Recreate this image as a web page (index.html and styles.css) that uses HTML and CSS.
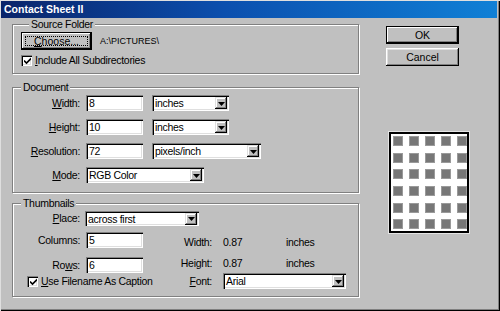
FILE: index.html
```html
<!DOCTYPE html>
<html>
<head>
<meta charset="utf-8">
<link rel="stylesheet" href="styles.css">
</head>
<body>
<div class="window">
  <div class="titlebar">Contact Sheet II</div>
  <div class="content">
    <div class="main">
      <fieldset class="group source">
        <legend>Source Folder</legend>
        <div class="inner">
          <div class="src-row">
            <button class="btn default focus"><u>C</u>hoose...</button>
            <span class="path">A:\PICTURES\</span>
          </div>
          <div class="check-row">
            <span class="cb"><svg width="7" height="7" viewBox="0 0 7 7"><path d="M0 2.5 L2.5 5 L7 0.5" fill="none" stroke="#000" stroke-width="1.6"/></svg></span>
            <span><u>I</u>nclude All Subdirectories</span>
          </div>
        </div>
      </fieldset>

      <fieldset class="group doc">
        <legend>Document</legend>
        <div class="doc-rows">
          <div class="row">
            <span class="lbl"><u>W</u>idth:</span>
            <span class="field num">8</span>
            <span class="select w77"><span class="val">inches</span><span class="arrow"><svg width="7" height="4" viewBox="0 0 7 4"><path d="M0 0H7L3.5 4Z" fill="#000"/></svg></span></span>
          </div>
          <div class="row">
            <span class="lbl"><u>H</u>eight:</span>
            <span class="field num">10</span>
            <span class="select w77"><span class="val">inches</span><span class="arrow"><svg width="7" height="4" viewBox="0 0 7 4"><path d="M0 0H7L3.5 4Z" fill="#000"/></svg></span></span>
          </div>
          <div class="row">
            <span class="lbl"><u>R</u>esolution:</span>
            <span class="field num">72</span>
            <span class="select w109"><span class="val">pixels/inch</span><span class="arrow"><svg width="7" height="4" viewBox="0 0 7 4"><path d="M0 0H7L3.5 4Z" fill="#000"/></svg></span></span>
          </div>
          <div class="row">
            <span class="lbl"><u>M</u>ode:</span>
            <span class="select w118 mode"><span class="val">RGB Color</span><span class="arrow"><svg width="7" height="4" viewBox="0 0 7 4"><path d="M0 0H7L3.5 4Z" fill="#000"/></svg></span></span>
          </div>
        </div>
      </fieldset>

      <fieldset class="group thumbs">
        <legend>Thumbnails</legend>
        <div class="tgrid">
          <span class="lbl c1 r1"><u>P</u>lace:</span>
          <span class="select w114 c2 r1"><span class="val">across first</span><span class="arrow"><svg width="7" height="4" viewBox="0 0 7 4"><path d="M0 0H7L3.5 4Z" fill="#000"/></svg></span></span>

          <span class="lbl c1 r2 mid">Columns:</span>
          <span class="field num c2 r2">5</span>
          <span class="lbl2 c3 r2 wl">Width:</span>
          <span class="value c4 r2 wl">0.87</span>
          <span class="value c5 r2 wl">inches</span>

          <span class="lbl c1 r3 mid">Ro<u>w</u>s:</span>
          <span class="field num c2 r3">6</span>
          <span class="lbl2 c3 r3 hl">Height:</span>
          <span class="value c4 r3 hl">0.87</span>
          <span class="value c5 r3 hl">inches</span>

          <div class="check-row cap r4">
            <span class="cb"><svg width="7" height="7" viewBox="0 0 7 7"><path d="M0 2.5 L2.5 5 L7 0.5" fill="none" stroke="#000" stroke-width="1.6"/></svg></span>
            <span><u>U</u>se Filename As Caption</span>
          </div>
          <span class="lbl2 c3 r4 fl"><u>F</u>ont:</span>
          <span class="select w123 font r4"><span class="val">Arial</span><span class="arrow"><svg width="7" height="4" viewBox="0 0 7 4"><path d="M0 0H7L3.5 4Z" fill="#000"/></svg></span></span>
        </div>
      </fieldset>
    </div>

    <div class="side">
      <button class="btn default">OK</button>
      <button class="btn">Cancel</button>
      <div class="preview">
        <i></i><i></i><i></i><i></i><i></i>
        <i></i><i></i><i></i><i></i><i></i>
        <i></i><i></i><i></i><i></i><i></i>
        <i></i><i></i><i></i><i></i><i></i>
        <i></i><i></i><i></i><i></i><i></i>
        <i></i><i></i><i></i><i></i><i></i>
      </div>
    </div>
  </div>
</div>
</body>
</html>
```

FILE: styles.css
```css
* { box-sizing: border-box; }
html, body { margin: 0; padding: 0; }
body {
  background: #c0c0c0;
  font-family: "Liberation Sans", Arial, sans-serif;
  font-size: 10.5px;
  letter-spacing: -0.3px;
  line-height: 13px;
  color: #000;
}
.window {
  width: 500px;
  height: 311px;
  background: #c0c0c0;
  padding: 1px 3px 3px 1px;
  box-shadow: inset 1px 1px #dfdfdf, inset -1px -1px #000, inset -2px -2px #808080;
  display: flex;
  flex-direction: column;
}
.titlebar {
  height: 17px;
  flex: none;
  background: linear-gradient(to right, #0a246a, #0b4fae 45%, #1080d6);
  color: #fff;
  font-weight: bold;
  font-size: 10.5px;
  letter-spacing: 0;
  line-height: 17px;
  padding-left: 3px;
}
.content {
  display: flex;
  padding-left: 11px;
}
.main {
  width: 347px;
  display: flex;
  flex-direction: column;
}
.side {
  width: 73px;
  margin-left: 27px;
  padding-top: 8px;
  display: flex;
  flex-direction: column;
}

/* group boxes */
.group {
  margin: 0;
  padding: 0;
  min-width: 0;
  border: 1px solid #808080;
  box-shadow: inset 1px 1px #fff, 1px 1px #fff;
}
.group legend {
  margin-left: 8px;
  padding: 0 2px;
  line-height: 13px;
  background: #c0c0c0;
}
.source { padding: 1px 0 7px 8px; }
.doc { margin-top: 7px; padding: 1px 0 9px 0; }
.thumbs { margin-top: 4px; padding: 1px 0 7px 0; }

/* buttons */
.btn {
  display: flex;
  align-items: center;
  justify-content: center;
  height: 18px;
  width: 73px;
  padding: 0;
  border: none;
  background: #c0c0c0;
  font: inherit;
  color: #000;
  box-shadow: inset -1px -1px #000, inset 1px 1px #fff, inset -2px -2px #808080, inset 2px 2px #dfdfdf;
}
.btn.default {
  box-shadow: inset 0 0 0 1px #000, inset -2px -2px #000, inset 2px 2px #fff, inset -3px -3px #808080;
}
.btn.focus {
  outline: 1px dotted #000;
  outline-offset: -5px;
}
.side .btn + .btn { margin-top: 4px; }

.src-row {
  display: flex;
  align-items: center;
}
.src-row .btn { width: 71px; }
.path {
  margin-left: 8px;
  font-size: 9px;
  letter-spacing: 0;
}

/* checkbox */
.check-row {
  display: flex;
  align-items: center;
  margin-top: 5px;
  height: 11px;
}
.cb {
  width: 11px;
  height: 11px;
  flex: none;
  background: #fff;
  margin-right: 3px;
  display: flex;
  align-items: center;
  justify-content: center;
  box-shadow: inset 1px 1px #808080, inset 2px 2px #000, inset -1px -1px #fff, inset -2px -2px #dfdfdf;
}
.cb svg { margin: 1px 0 0 1px; }

/* fields */
.field, .select {
  height: 16px;
  background: #fff;
  box-shadow: inset 1px 1px #808080, inset 2px 2px #000, inset -1px -1px #fff, inset -2px -2px #dfdfdf;
}
.field {
  display: block;
  width: 57px;
  padding: 2px 0 0 3px;
  line-height: 12px;
}
.select {
  display: flex;
  align-items: center;
  padding: 2px;
}
.select .val {
  flex: 1;
  padding-left: 1px;
  line-height: 12px;
  white-space: nowrap;
}
.select .arrow {
  width: 12px;
  height: 12px;
  flex: none;
  display: flex;
  align-items: center;
  justify-content: center;
  background: #c0c0c0;
  box-shadow: inset -1px -1px #000, inset 1px 1px #dfdfdf, inset -2px -2px #808080, inset 2px 2px #fff;
}
.select .arrow svg { margin: 1px 0 0 0; }
.w77 { width: 77px; }
.w109 { width: 109px; }
.w114 { width: 114px; }
.w118 { width: 118px; }
.w123 { width: 123px; }

/* document rows */
.doc-rows {
  display: flex;
  flex-direction: column;
  gap: 8px;
}
.row {
  display: flex;
  align-items: center;
  height: 16px;
}
.lbl {
  width: 67px;
  margin-right: 6px;
  text-align: right;
  white-space: nowrap;
}
.row .field { margin-right: 9px; }

/* thumbnails grid */
.tgrid {
  display: grid;
  grid-template-columns: 73px 57px 80px 63px 1fr;
  grid-template-rows: 21px 25px 16px 16px;
  align-items: start;
}
.tgrid .lbl { width: auto; margin-right: 6px; }
.c1 { grid-column: 1; }
.c2 { grid-column: 2; }
.c3 { grid-column: 3; }
.c4 { grid-column: 4; }
.c5 { grid-column: 5; }
.r1 { grid-row: 1; }
.r2 { grid-row: 2; }
.r3 { grid-row: 3; }
.r4 { grid-row: 4; }
.tgrid .r1.lbl { line-height: 15px; }
.tgrid .r1.select { height: 15px; margin-left: -1px; }
.tgrid .mid { line-height: 16px; }
.lbl2 {
  text-align: right;
  padding-right: 11px;
  white-space: nowrap;
}
.wl { margin-top: 4px; }
.hl { margin-top: 0; }
.fl { line-height: 16px; }
.cap {
  grid-column: 1 / 4;
  margin: 3px 0 0 14px;
}
.font { grid-column: 4 / 6; }

/* preview */
.preview {
  width: 80px;
  height: 101px;
  margin: 66px 0 0 3px;
  background: #fff;
  border: 2px solid #000;
  box-shadow: 0 0 0 1px #e4e4e4;
  padding: 2px 0 0 2px;
  display: grid;
  grid-template-columns: repeat(5, 10px);
  grid-auto-rows: 10px;
  column-gap: 6px;
  row-gap: 6.67px;
}
.preview i {
  display: block;
  background: #777;
  border: 1px solid #9a9a9a;
}
```
